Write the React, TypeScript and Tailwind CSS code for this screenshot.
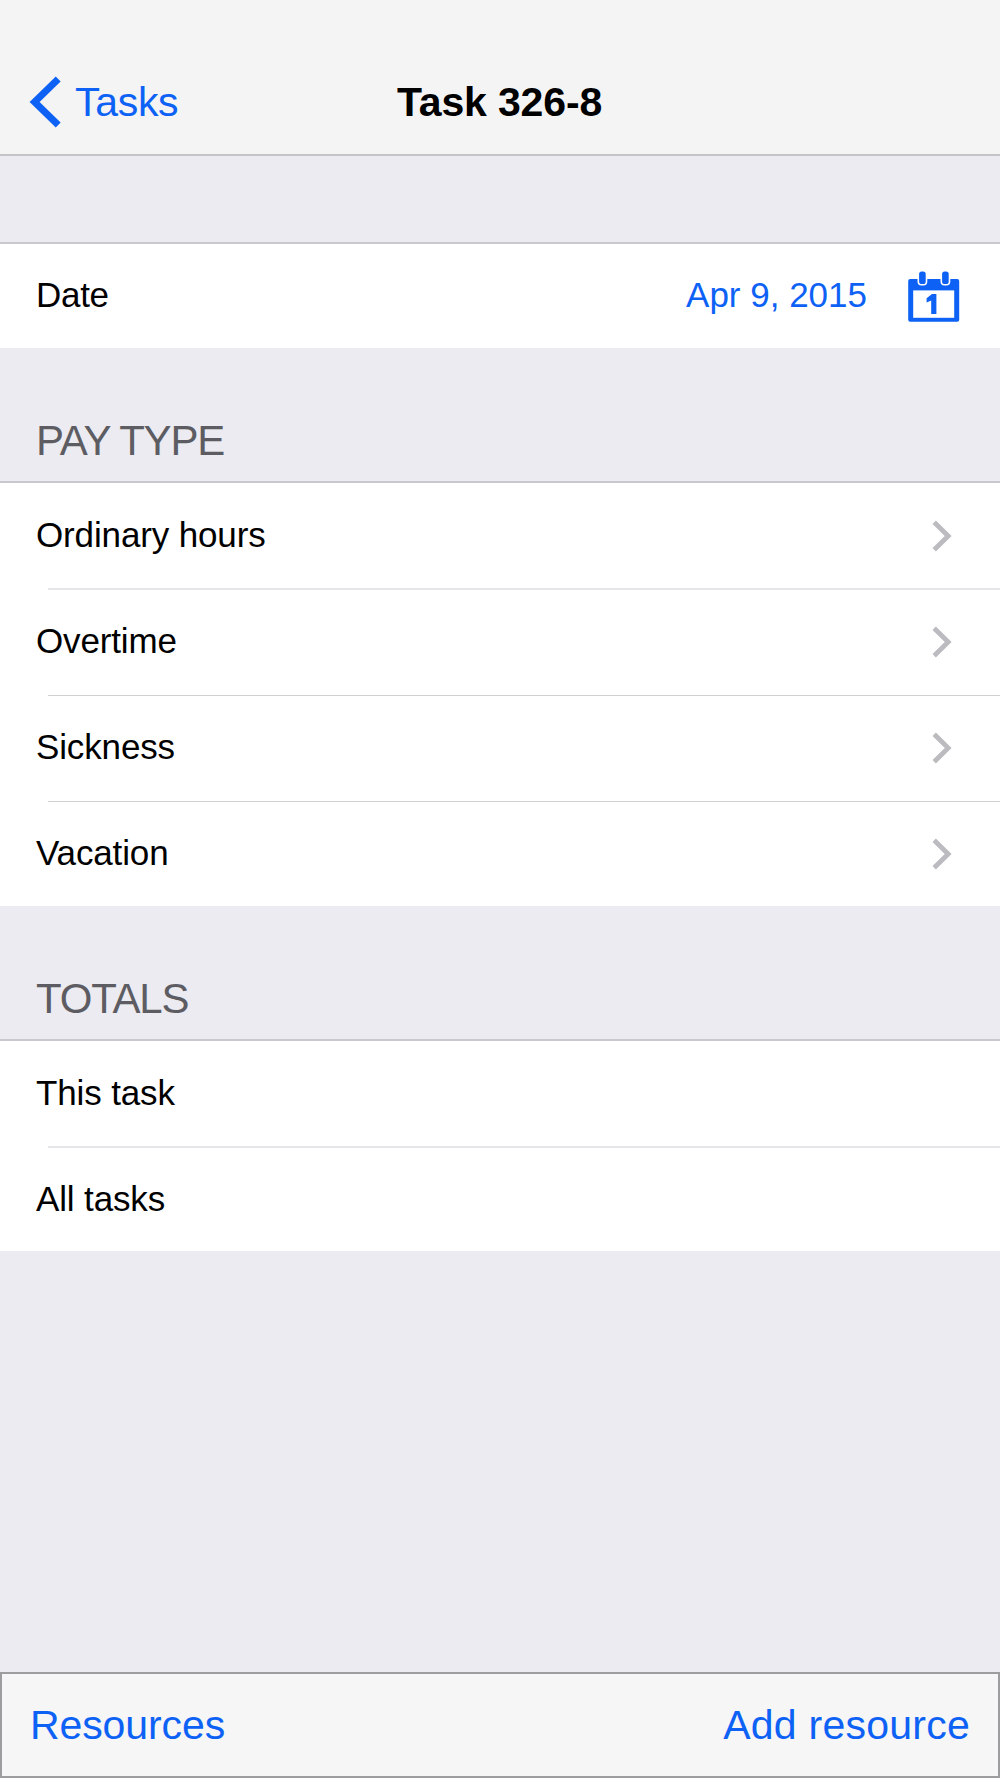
import { ReactNode } from "react";

interface RowProps {
  label: string;
  chevron?: boolean;
  className: string;
}

const payTypes = [
  { label: "Ordinary hours", className: "h-[105px] pb-[2px]" },
  { label: "Overtime", className: "h-[105px] pb-[3px]" },
  { label: "Sickness", className: "h-[105px] pb-[3px]" },
  { label: "Vacation", className: "h-[104px] pb-[2px]" },
];

const payDividers = ["h-0.5 bg-[#e6e6e8]", "h-px bg-[#d0d0d3]", "h-px bg-[#d0d0d3]"];

function BackIcon() {
  return (
    <svg width="32" height="52" viewBox="0 0 32 52" fill="none">
      <path d="M29.2 3 L5.6 26 L29.2 49" stroke="#0d62f5" strokeWidth="7" />
    </svg>
  );
}

function Chevron() {
  return (
    <svg className="relative top-px" width="20" height="32" viewBox="0 0 20 32" fill="none">
      <path d="M2.2 2.2 L16.2 16 L2.2 29.8" stroke="#bbbbc0" strokeWidth="4.8" />
    </svg>
  );
}

function CalendarIcon() {
  return (
    <svg className="relative top-[1.5px]" width="52" height="52" viewBox="0 0 52 52">
      <rect x="0.2" y="8" width="51" height="42.8" rx="2" fill="#0d62f5" />
      <rect x="5.2" y="19.4" width="41" height="27.4" fill="#fff" />
      <rect x="9.5" y="-1" width="9.8" height="15.5" rx="4" fill="#fff" />
      <rect x="32.5" y="-1" width="9.8" height="15.5" rx="4" fill="#fff" />
      <rect x="11.1" y="0.5" width="6.6" height="12.5" rx="2.6" fill="#0d62f5" />
      <rect x="34.1" y="0.5" width="6.6" height="12.5" rx="2.6" fill="#0d62f5" />
      <path d="M24 23 H28.4 V43 H23.2 V29.4 L18.6 31.6 V27.2 Z" fill="#0d62f5" />
    </svg>
  );
}

function Row({ label, chevron, className }: RowProps) {
  return (
    <div className={`flex items-center justify-between pl-9 pr-12 ${className}`}>
      <span className="text-[35px] leading-10 tracking-[-0.14px]">{label}</span>
      {chevron && <Chevron />}
    </div>
  );
}

function SectionHeader({ children }: { children: ReactNode }) {
  return (
    <h2 className="flex h-[135px] items-end border-b-2 border-[#c9c8ce] pb-[17px] pl-9 text-[42px] leading-[46px] tracking-[-1.2px] text-[#5d5c62]">
      {children}
    </h2>
  );
}

export default function App() {
  return (
    <div className="flex h-[1778px] w-[1000px] flex-col overflow-hidden bg-[#ebebf1] font-['Liberation_Sans',Arial,sans-serif] text-black">
      {/* Navigation bar */}
      <header className="grid h-[156px] shrink-0 grid-cols-3 items-end border-b-2 border-[#c4c4c8] bg-[#f4f4f4] pb-[26px]">
        <button className="flex items-center gap-[14px] pl-[29px] text-[41px] leading-[52px] tracking-[-0.3px] text-[#0d62f5]">
          <BackIcon />
          <span>Tasks</span>
        </button>
        <h1 className="pr-px text-center text-[41px] font-bold leading-[52px] tracking-[-0.15px]">Task 326-8</h1>
      </header>

      <main className="flex-1">
        <div className="mt-[86px] flex h-[106px] items-center border-t-2 border-[#c9c8ce] bg-white pb-0.5 pl-9 pr-10 text-[35px] leading-10">
          <span className="flex-1 tracking-[-0.3px]">Date</span>
          <button className="flex items-center gap-[41px] text-[#0d62f5]">
            <span>Apr 9, 2015</span>
            <CalendarIcon />
          </button>
        </div>

        {/* Pay type */}
        <SectionHeader>PAY TYPE</SectionHeader>
        <div className="bg-white">
          {payTypes.map((item, i) => (
            <div key={item.label}>
              <Row label={item.label} className={item.className} chevron />
              {i < payDividers.length && <div className={`ml-12 ${payDividers[i]}`} />}
            </div>
          ))}
        </div>

        {/* Totals */}
        <SectionHeader>TOTALS</SectionHeader>
        <div className="bg-white">
          <Row label="This task" className="h-[105px] pb-[2px]" />
          <div className="ml-12 h-0.5 bg-[#e6e6e8]" />
          <Row label="All tasks" className="h-[103px] pb-[2px]" />
        </div>
      </main>

      {/* Bottom toolbar */}
      <footer className="flex h-[106px] shrink-0 items-center justify-between border-2 border-[#9d9d9f] bg-[#f6f6f6] pl-[28px] pr-[28px] text-[41px] leading-[46px] text-[#0d62f5]">
        <button className="tracking-[-0.1px]">Resources</button>
        <button className="tracking-[0.25px]">Add resource</button>
      </footer>
    </div>
  );
}
